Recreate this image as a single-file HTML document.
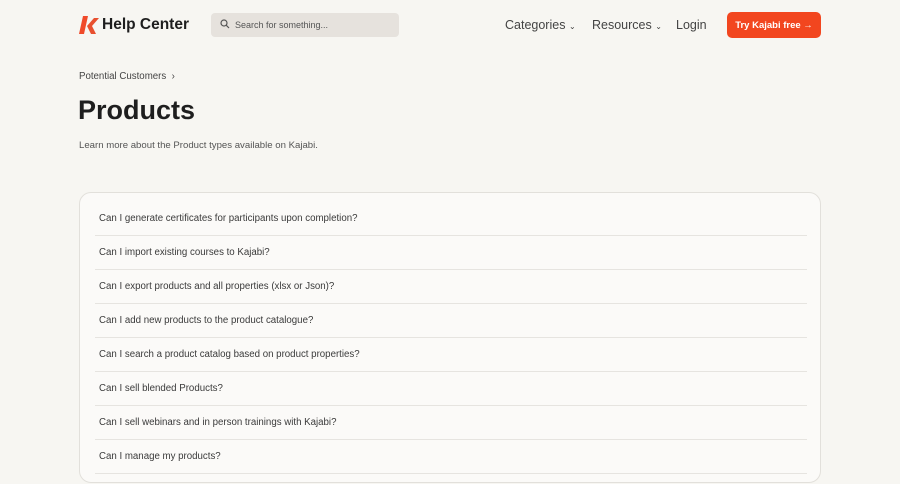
<!DOCTYPE html>
<html><head><style>
*{margin:0;padding:0;box-sizing:border-box}
html,body{width:900px;height:484px;overflow:hidden}
body{background:#f7f6f2;font-family:"Liberation Sans",sans-serif;color:#222;position:relative}
.a{position:absolute}
.nav{font-size:12.5px;color:#444;top:18px}
.card{left:79px;top:192px;width:742px;height:291px;border:1.5px solid #e2e0db;border-radius:12px;background:#fbfaf8;overflow:hidden}
.row{position:absolute;left:15px;width:712px;height:34px;border-bottom:1px solid #e6e4e0;font-size:9.7px;color:#3a3a3a;padding:0 0 0 4px;line-height:34px}
</style></head><body>
<svg class="a" style="left:79px;top:16px" width="20" height="18" viewBox="0 0 20 18"><path d="M4 0h5L5 18H0z" fill="#f04a2a"/><path d="M8 10L15 2h5l-7 8 4 8h-5z" fill="#e8502f"/></svg>
<div class="a" style="left:102px;top:16px;font-size:15.5px;font-weight:bold;color:#1e1e1e">Help Center</div>
<div class="a" style="left:211px;top:13px;width:188px;height:24px;background:#e6e2dd;border-radius:4px"></div>
<svg class="a" style="left:220px;top:19px" width="10" height="10" viewBox="0 0 10 10"><circle cx="4" cy="4" r="3" stroke="#555" stroke-width="1.2" fill="none"/><path d="M6.3 6.3L9 9" stroke="#555" stroke-width="1.2"/></svg>
<div class="a" style="left:235px;top:20px;font-size:9px;color:#555">Search for something...</div>
<div class="a nav" style="left:505px">Categories <span style="font-size:8px">⌄</span></div>
<div class="a nav" style="left:592px">Resources <span style="font-size:8px">⌄</span></div>
<div class="a nav" style="left:676px">Login</div>
<div class="a" style="left:727px;top:12px;width:94px;height:26px;background:#f2461f;border-radius:5px;color:#fff;font-size:9.5px;font-weight:bold;display:flex;align-items:center;justify-content:center">Try Kajabi free →</div>
<div class="a" style="left:79px;top:71px;font-size:9.7px;color:#444">Potential Customers &nbsp;›</div>
<div class="a" style="left:78px;top:95px;font-size:27px;font-weight:bold;color:#1e1e1e">Products</div>
<div class="a" style="left:79px;top:140px;font-size:9.6px;color:#555">Learn more about the Product types available on Kajabi.</div>
<div class="a card">
<div class="row" style="top:9px">Can I generate certificates for participants upon completion?</div>
<div class="row" style="top:43px">Can I import existing courses to Kajabi?</div>
<div class="row" style="top:77px">Can I export products and all properties (xlsx or Json)?</div>
<div class="row" style="top:111px">Can I add new products to the product catalogue?</div>
<div class="row" style="top:145px">Can I search a product catalog based on product properties?</div>
<div class="row" style="top:179px">Can I sell blended Products?</div>
<div class="row" style="top:213px">Can I sell webinars and in person trainings with Kajabi?</div>
<div class="row" style="top:247px">Can I manage my products?</div>
</div>
</body></html>
